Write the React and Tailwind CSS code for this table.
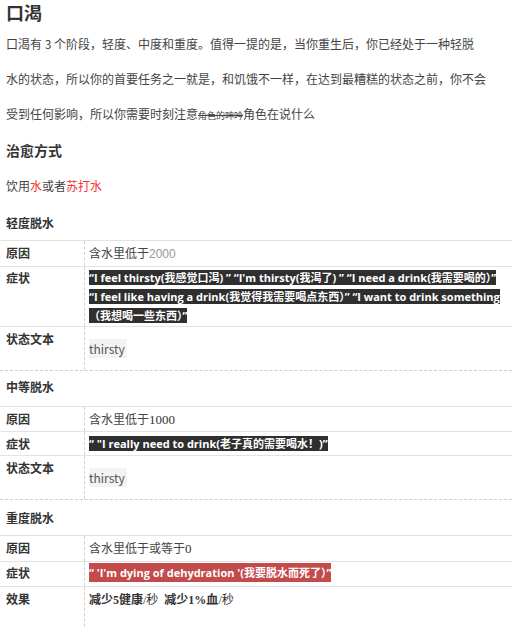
import React from 'react';

const sans = { fontFamily: '"Noto Sans CJK SC", sans-serif' };
const latin = { fontFamily: '"Open Sans", "Noto Sans CJK SC", sans-serif' };
const serif = { fontFamily: '"Liberation Serif", serif' };

const Row = ({ label, children, cellClass = '', labelClass = 'pt-[3px] leading-[17px]', last = false }) => (
  <div
    className={`grid grid-cols-[85px_1fr] border-t border-t-[#e3e3e3] text-[12px] leading-[17px] ${
      last ? 'border-b border-dashed border-b-[#cfcfcf]' : ''
    }`}
    style={{ borderTopStyle: 'solid' }}
  >
    <div className={`pl-[6px] border-r border-dashed border-r-[#cfcfcf] font-bold text-[#333] ${labelClass}`}>
      {label}
    </div>
    <div className={`pl-[4px] ${cellClass}`}>{children}</div>
  </div>
);

const Quote = ({ children, red }) => (
  <span
    className={`${red ? 'bg-[#c24b4b] py-[2px]' : 'bg-[#2f2f2f]'} text-white font-bold whitespace-nowrap`}
    style={latin}
  >
    {children}
  </span>
);

const Status = () => (
  <span className="block w-fit bg-[#f3f3f3] text-[12px] leading-[19px] text-[#555] pr-[2px]">thirsty</span>
);

const Heading = ({ children, className = '' }) => (
  <div className={`text-[12px] font-bold leading-[20px] text-[#333] pl-[6px] ${className}`}>{children}</div>
);

export default function App() {
  return (
    <div className="w-[512px] bg-white text-[#444] overflow-hidden" style={sans}>
      <div className="px-[6px]">
        <h1 className="text-[18px] font-bold leading-[24px] text-[#333]">口渴</h1>
        <p className="mt-[2px] text-[12px] leading-[35px]">
          口渴有 3 个阶段，轻度、中度和重度。值得一提的是，当你重生后，你已经处于一种轻脱
          <br />
          水的状态，所以你的首要任务之一就是，和饥饿不一样，在达到最糟糕的状态之前，你不会
          <br />
          受到任何影响，所以你需要时刻注意
          <span className="text-[9px] line-through">角色的呻吟</span>
          角色在说什么
        </p>
        <h2 className="mt-[7px] text-[14px] font-bold leading-[20px] text-[#333]">治愈方式</h2>
        <p className="mt-[16px] text-[12px] leading-[20px]">
          饮用<span className="text-[#f53333]">水</span>或者<span className="text-[#f53333]">苏打水</span>
        </p>
      </div>

      <Heading className="mt-[17px]">轻度脱水</Heading>
      <div className="mt-[7px]">
        <Row label="原因" cellClass="pt-[3px] pb-[5px]">
          含水里低于
          <span className="text-[#999] leading-none" style={{ fontFamily: '"Liberation Sans", sans-serif' }}>
            2000
          </span>
        </Row>
        <Row label="症状" labelClass="pt-[1px] leading-[19px]" cellClass="pt-[1px] pb-[1px] text-[11px] leading-[19px]">
          <Quote>“I feel thirsty(我感觉口渴) ” “I'm thirsty(我渴了) ” “I need a drink(我需要喝的）”</Quote>
          <br />
          <Quote>“I feel like having a drink(我觉得我需要喝点东西）” “I want to drink something</Quote>
          <br />
          <Quote>（我想喝一些东西）”</Quote>
        </Row>
        <Row label="状态文本" cellClass="pt-[12px] pb-[12px]" last>
          <Status />
        </Row>
      </div>

      <Heading className="mt-[6px]">中等脱水</Heading>
      <div className="mt-[9px]">
        <Row label="原因" cellClass="pt-[3px] pb-[4px]">
          含水里低于<span className="text-[13px] text-[#333] leading-none" style={serif}>1000</span>
        </Row>
        <Row label="症状" labelClass="pt-[2px] leading-[19px]" cellClass="pt-[2px] pb-[2px] text-[11px] leading-[19px]">
          <Quote>“ "I really need to drink(老子真的需要喝水！)”</Quote>
        </Row>
        <Row label="状态文本" cellClass="pt-[12px] pb-[12px]" last>
          <Status />
        </Row>
      </div>

      <Heading className="mt-[8px]">重度脱水</Heading>
      <div className="mt-[7px]">
        <Row label="原因" cellClass="pt-[3px] pb-[5px]">
          含水里低于或等于<span className="text-[13px] text-[#333] leading-none" style={serif}>0</span>
        </Row>
        <Row label="症状" labelClass="pt-[1px] leading-[19px]" cellClass="pt-[1px] pb-[4px] text-[11px] leading-[19px]">
          <Quote red>“ 'I'm dying of dehydration '(我要脱水而死了）”</Quote>
        </Row>
        <Row label="效果" cellClass="pt-[3px] pb-[30px] text-[#333]">
          <span className="leading-none" style={{ fontFamily: '"Liberation Serif", "Noto Sans CJK SC", serif' }}>
            <b>减少5健康</b>/秒&nbsp; <b>减少1%血</b>/秒
          </span>
        </Row>
      </div>
    </div>
  );
}
